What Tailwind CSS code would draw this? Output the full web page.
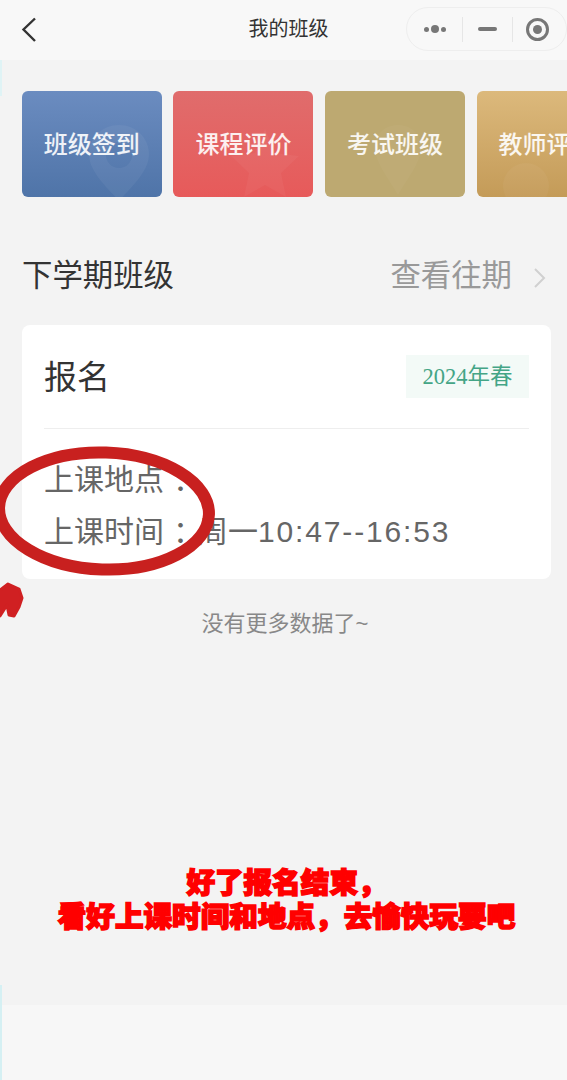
<!DOCTYPE html>
<html lang="zh-CN">
<head>
    <meta charset="UTF-8">
    <meta name="viewport" content="width=device-width, initial-scale=1.0">
    <title>我的班级</title>
    <script src="https://cdn.jsdelivr.net/npm/@tailwindcss/browser@4"></script>
</head>
<body class="bg-[#f7f7f7] font-['Liberation_Sans','Noto_Sans_CJK_SC',sans-serif]">
<div class="relative w-[567px] h-[1080px] overflow-hidden flex flex-col">
    <!-- nav bar -->
    <header class="h-[60px] shrink-0 bg-[#f8f8f8] relative flex items-center justify-center">
        <svg class="absolute left-[20px] top-[16px]" width="20" height="27" viewBox="0 0 20 27" fill="none" stroke="#333" stroke-width="2.4"><path d="M15 2.5 3.5 13.5 15 25"/></svg>
        <span class="text-[20px] text-[#333] ml-[10px] mt-[-2px]">我的班级</span>
        <div class="absolute left-[406px] top-[7px] w-[161px] h-[44px] rounded-full border border-[#eeeeee] flex items-center">
            <div class="w-[55px] flex items-center justify-center gap-[2px]">
                <span class="size-[5px] rounded-full bg-[#777]"></span>
                <span class="size-[8px] rounded-full bg-[#777]"></span>
                <span class="size-[5px] rounded-full bg-[#777]"></span>
            </div>
            <div class="w-px h-[25px] bg-[#e6e6e6]"></div>
            <div class="w-[49px] flex justify-center"><span class="w-[19px] h-[4px] rounded-full bg-[#777]"></span></div>
            <div class="w-px h-[25px] bg-[#e6e6e6]"></div>
            <div class="w-[48px] flex justify-center">
                <span class="size-[23px] rounded-full border-[3px] border-[#777] flex items-center justify-center"><span class="size-[9px] rounded-full bg-[#777]"></span></span>
            </div>
        </div>
    </header>

    <main class="h-[945px] shrink-0 bg-[#f3f3f3]">
        <!-- tiles -->
        <div class="flex gap-[11.6px] pl-[21.8px] pt-[31px] w-[700px]">
            <div class="relative w-[140px] h-[106px] shrink-0 rounded-[6px] overflow-hidden bg-gradient-to-b from-[#6b8cc0] to-[#4f74a8] flex items-center justify-center">
                <svg class="absolute left-[64px] top-[34px]" width="66" height="76" viewBox="0 0 66 76" fill="#fff" fill-opacity=".05"><path fill-rule="evenodd" d="M33 0c17 0 30 13 30 29 0 18-18 33-30 47C21 62 3 47 3 29 3 13 16 0 33 0Zm0 17a13 13 0 1 0 0 26 13 13 0 0 0 0-26Z"/></svg>
                <span class="relative text-[24px] leading-none font-medium text-white/90 mt-[2px]">班级签到</span>
            </div>
            <div class="relative w-[140px] h-[106px] shrink-0 rounded-[6px] overflow-hidden bg-gradient-to-b from-[#e06c6c] to-[#e75a5a] flex items-center justify-center">
                <svg class="absolute left-[58px] top-[38px]" width="68" height="68" viewBox="0 0 68 68" fill="#fff" fill-opacity=".04"><path d="m34 0 10 24 24 3-18 17 5 24-21-12-21 12 5-24L0 27l24-3Z"/></svg>
                <span class="relative text-[24px] leading-none font-medium text-white/90 mt-[2px]">课程评价</span>
            </div>
            <div class="relative w-[140px] h-[106px] shrink-0 rounded-[6px] overflow-hidden bg-[#bda971] flex items-center justify-center">
                <svg class="absolute left-[50px] top-[34px]" width="46" height="70" viewBox="0 0 46 70" fill="#fff" fill-opacity=".03"><path d="M23 0c13 0 23 9 23 22 0 16-14 32-23 48C14 54 0 38 0 22 0 9 10 0 23 0Z"/></svg>
                <span class="relative text-[24px] leading-none font-medium text-white/90 mt-[2px]">考试班级</span>
            </div>
            <div class="relative w-[140px] h-[106px] shrink-0 rounded-[6px] overflow-hidden bg-gradient-to-b from-[#dcb97c] to-[#c49b58] flex items-center justify-center">
                <svg class="absolute left-[26px] top-[72px]" width="46" height="46" viewBox="0 0 46 46" fill="#fff" fill-opacity=".04"><circle cx="23" cy="23" r="23"/></svg>
                <span class="relative text-[24px] leading-none font-medium text-white/90 mt-[2px]">教师评价</span>
            </div>
        </div>

        <!-- section heading -->
        <div class="flex items-center justify-between pl-[22px] pr-[20px] mt-[58px] h-[40px]">
            <h2 class="text-[30.4px] leading-none font-normal text-[#333]">下学期班级</h2>
            <div class="flex items-center text-[#999]">
                <span class="text-[30.4px] leading-none">查看往期</span>
                <svg class="ml-[21px] mt-[5px]" width="14" height="22" viewBox="0 0 14 22" fill="none" stroke="#d0d0d0" stroke-width="2"><path d="m2 2 9 9-9 9"/></svg>
            </div>
        </div>

        <!-- class card -->
        <section class="mt-[30px] ml-[22px] w-[529px] h-[254px] rounded-[8px] bg-white px-[22px]">
            <div class="flex items-center justify-between h-[104px] border-b border-[#eeeeee]">
                <span class="text-[33px] leading-none text-[#333] mt-[2px]">报名</span>
                <span class="w-[123px] h-[43px] bg-[#f3faf7] text-[#44a586] text-[22.5px] font-['Liberation_Serif','Noto_Sans_CJK_SC',serif] flex items-center justify-center">2024年春</span>
            </div>
            <div class="pt-[25px] text-[30px] leading-[52px] text-[#666]">
                <p>上课地点<span class="pl-[9px] mr-[-5px]">：</span></p>
                <p>上课时间<span class="pl-[9px] mr-[-5px]">：</span>周一<span class="tracking-[1.85px]">10:47--16:53</span></p>
            </div>
        </section>

        <p class="mt-[34px] pl-[3px] text-center text-[22px] leading-none text-[#888]">没有更多数据了~</p>

        <!-- overlaid caption -->
        <div class="mt-[231px] pl-[6px] text-center text-[28.6px] leading-[34px] font-black text-[#ff0000] [-webkit-text-stroke:1.6px_#ff0000]">
            <p>好了报名结束，</p>
            <p>看好上课时间和地点，去愉快玩要吧</p>
        </div>
    </main>

    <!-- left edge tint left by the capture -->
    <div class="absolute left-0 top-[60px] w-[2px] h-[36px] bg-[#dff3f5]"></div>
    <div class="absolute left-0 top-[985px] w-[2px] h-[95px] bg-[#d5f0f3]"></div>

    <!-- hand drawn marks -->
    <svg class="absolute left-0 top-[440px]" width="230" height="190" viewBox="0 0 230 190" fill="none">
        <ellipse cx="104" cy="71" rx="105" ry="58.5" transform="rotate(2 104 71)" stroke="#c8201f" stroke-width="12"/>
        <path d="M0 150 8 144 19 149 22 158 19 167 14 176 9 175 7 165 0 176Z" fill="#d02022" stroke="#d02022" stroke-width="3" stroke-linejoin="round"/>
    </svg>
</div>
</body>
</html>
